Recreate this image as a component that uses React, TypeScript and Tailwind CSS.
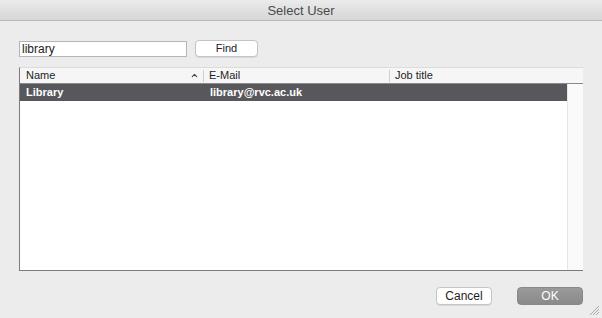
import { ChevronUp } from "lucide-react";

const font = "font-['Liberation_Sans',Arial,sans-serif]";

const columns = [
  { label: "Name", width: "w-[184px]", sort: true },
  { label: "E-Mail", width: "w-[186px]", sort: false },
  { label: "Job title", width: "flex-1", sort: false },
];

function ResizeGrip() {
  return (
    <svg width="11" height="11" viewBox="0 0 11 11" className="absolute right-[2px] bottom-[2px]">
      <line x1="10" y1="1" x2="1" y2="10" stroke="#a8a8a8" strokeWidth="1" />
      <line x1="10" y1="4" x2="4" y2="10" stroke="#a8a8a8" strokeWidth="1" />
      <line x1="10" y1="7" x2="7" y2="10" stroke="#a8a8a8" strokeWidth="1" />
    </svg>
  );
}

export default function App() {
  return (
    <div className={`relative w-[602px] h-[318px] bg-[#ececec] flex flex-col overflow-hidden ${font}`}>
      {/* title bar */}
      <div className="h-[21px] shrink-0 flex items-center justify-center bg-gradient-to-b from-[#ebebeb] to-[#d6d6d6] border-b border-[#b9b9b9]">
        <span className="text-[13px] text-[#4a4a4a] leading-none">Select User</span>
      </div>

      {/* search row */}
      <div className="flex items-center gap-[8px] pl-[19px] mt-[19px]">
        <div className="w-[168px] h-[16px] bg-white border border-[#b5b5b5] flex items-center px-[2px]">
          <span className="text-[12px] text-[#222] leading-none">library</span>
        </div>
        <button className="w-[63px] h-[17px] bg-white border border-[#c4c4c4] rounded-[4px] shadow-[0_1px_0_rgba(0,0,0,0.08)] flex items-center justify-center text-[11px] text-[#222] leading-none">
          Find
        </button>
      </div>

      {/* list */}
      <div className="ml-[19px] mt-[10px] w-[564px] h-[204px] bg-white border-l border-b border-[#7b7b7b] border-t border-t-[#dcdcdc] flex flex-col">
        <div className="h-[16px] shrink-0 flex bg-[#f6f6f6] border-b border-[#8a8a8a]">
          {columns.map((c, i) => (
            <div key={c.label} className={`${c.width} flex items-center ${i > 0 ? "pl-[5px]" : "pl-[6px]"} ${i < 2 ? "border-r border-[#cfcfcf]" : ""} h-[12px] self-center`}>
              <span className="text-[11px] text-[#1e1e1e] leading-none">{c.label}</span>
              {c.sort && <ChevronUp className="ml-auto mr-[4px] w-[9px] h-[9px] text-[#444]" strokeWidth={3} />}
            </div>
          ))}
        </div>
        <div className="flex-1 flex">
          <div className="flex-1">
            <div className="h-[17px] bg-[#58575c] flex items-center">
              <div className="w-[184px] pl-[6px] text-[11px] font-bold text-white leading-none">Library</div>
              <div className="w-[186px] pl-[6px] text-[11px] font-bold text-white leading-none">library@rvc.ac.uk</div>
              <div className="flex-1" />
            </div>
          </div>
          <div className="w-[16px] bg-[#fafafa] border-l border-[#e6e6e6]" />
        </div>
      </div>

      {/* buttons */}
      <div className="flex justify-end gap-[25px] pr-[19px] mt-[16px]">
        <button className="w-[56px] h-[18px] bg-white border border-[#c4c4c4] rounded-[4px] shadow-[0_1px_0_rgba(0,0,0,0.08)] flex items-center justify-center text-[12px] text-[#1e1e1e] leading-none">
          Cancel
        </button>
        <button className="w-[66px] h-[18px] bg-gradient-to-b from-[#9a9a9a] to-[#8a8a8a] border border-[#888] rounded-[4px] flex items-center justify-center text-[12px] text-white leading-none">
          OK
        </button>
      </div>

      <ResizeGrip />
    </div>
  );
}
